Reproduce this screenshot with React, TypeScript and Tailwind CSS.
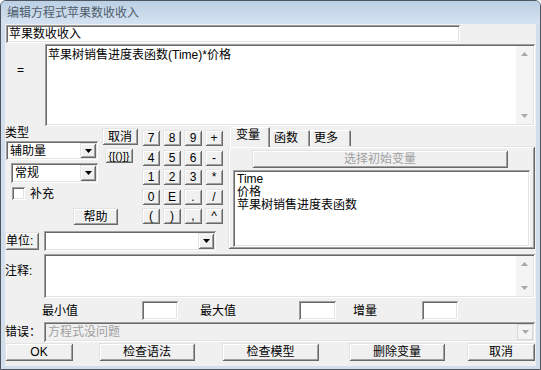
import type { ReactNode } from "react";
import clsx from "clsx";

// classic win32 3D edges
const raised =
  "bg-[#f0f0f0] shadow-[inset_1px_1px_0_#e3e3e3,inset_-1px_-1px_0_#696969,inset_2px_2px_0_#fff,inset_-2px_-2px_0_#a0a0a0]";
const sunken =
  "shadow-[inset_1px_1px_0_#a0a0a0,inset_-1px_-1px_0_#fff,inset_2px_2px_0_#696969,inset_-2px_-2px_0_#e3e3e3]";

function Btn({
  children,
  className,
  disabled,
}: {
  children: ReactNode;
  className?: string;
  disabled?: boolean;
}) {
  return (
    <div
      className={clsx(
        "flex items-center justify-center shrink-0 whitespace-nowrap",
        raised,
        disabled ? "text-[#a0a0a0]" : "text-black",
        className
      )}
    >
      {children}
    </div>
  );
}

function Arrow({ up, color = "#000" }: { up?: boolean; color?: string }) {
  return (
    <svg width="7" height="4" viewBox="0 0 7 4">
      <path d={up ? "M0 4h7L3.5 0z" : "M0 0h7L3.5 4z"} fill={color} />
    </svg>
  );
}

function Combo({ text, className }: { text?: string; className?: string }) {
  return (
    <div className={clsx("flex bg-white p-[2px] shrink-0", sunken, className)}>
      <div className="flex-1 flex items-center pl-[2px]">{text}</div>
      <div className={clsx("w-[16px] flex items-center justify-center", raised)}>
        <Arrow />
      </div>
    </div>
  );
}

function VScroll() {
  return (
    <div className="w-[17px] flex flex-col justify-between items-center bg-[#f4f4f4] py-[6px]">
      <Arrow up color="#a8a8a8" />
      <Arrow color="#a8a8a8" />
    </div>
  );
}

function TextBox({ children, className }: { children?: ReactNode; className?: string }) {
  return (
    <div className={clsx("flex bg-white p-[2px]", sunken, className)}>
      <div className="flex-1 pl-[1px] pt-[2px]">{children}</div>
      <VScroll />
    </div>
  );
}

const keys = ["7", "8", "9", "+", "4", "5", "6", "-", "1", "2", "3", "*", "0", "E", ".", "/", "(", ")", ",", "^"];

export default function App() {
  return (
    <div className="w-[541px] h-[370px] overflow-hidden text-[12px] leading-[14px] text-black font-['Liberation_Sans','Noto_Sans_CJK_SC',sans-serif]">
      <div className="h-full flex flex-col border border-[#4c5560] rounded-t-[6px] bg-[#d2deec]">
        <div className="h-[23px] shrink-0 flex items-center pl-[6px] rounded-t-[5px] bg-gradient-to-b from-[#bccfe4] to-[#d5e2f0] text-[#4e5d6d]">
          编辑方程式苹果数收收入
        </div>

        <div className="flex-1 mx-[4px] mb-[3px] bg-[#f0f0f0] flex flex-col">
          <div className={clsx("mt-[1px] ml-[1px] w-[454px] h-[18px] bg-white flex items-center pl-[3px]", sunken)}>
            苹果数收收入
          </div>

          <div className="flex h-[82px] mt-[1px]">
            <div className="w-[40px] pl-[12px] pt-[19px]">=</div>
            <TextBox className="flex-1 mr-[1px]">苹果树销售进度表函数(Time)*价格</TextBox>
          </div>

          <div className="flex h-[126px]">
            <div className="w-[221px] flex flex-col">
              <div className="flex h-[102px]">
                <div className="w-[137px] flex flex-col">
                  <div className="flex">
                    <div className="w-[97px] flex flex-col">
                      <div className="h-[14px]">类型</div>
                      <Combo text="辅助量" className="mt-[1px] ml-[1px] w-[92px] h-[19px]" />
                      <Combo text="常规" className="mt-[3px] ml-[6px] w-[87px] h-[20px]" />
                      <div className="mt-[4px] ml-[7px] h-[13px] flex items-center gap-[5px]">
                        <div className={clsx("w-[13px] h-[13px] bg-white", sunken)} />
                        <span>补充</span>
                      </div>
                    </div>
                    <div className="flex flex-col">
                      <Btn className="mt-[2px] w-[36px] h-[17px]">取消</Btn>
                      <Btn className="mt-[3px] ml-[3px] w-[28px] h-[15px] text-[11px]">{"{[()]}"}</Btn>
                    </div>
                  </div>
                  <Btn className="mt-[8px] ml-[68px] w-[45px] h-[17px]">帮助</Btn>
                </div>
                <div className="mt-[4px] grid grid-cols-[repeat(4,18px)] auto-rows-[16px] gap-x-[3px] gap-y-[3.5px] h-fit">
                  {keys.map((k) => (
                    <Btn key={k} className="text-[12px]">
                      {k}
                    </Btn>
                  ))}
                </div>
              </div>
              <div className="flex mt-[3px] h-[20px]">
                <Btn className="mt-[1px] w-[34px] h-[18px] justify-start pl-[1px]">单位:</Btn>
                <Combo className="ml-[5px] w-[172px] h-[20px]" />
              </div>
            </div>

            <div className="w-[307px] ml-[2px] flex flex-col pt-[1px] pb-[3px]">
              <div className="flex h-[19px] items-end pl-[2px]">
                <div className="relative -mb-px h-[20px] w-[40px] pl-[6px] pt-[1px] bg-[#f0f0f0] rounded-t-[2px] shadow-[inset_1px_1px_0_#fff,inset_-1px_0_0_#696969,inset_-2px_0_0_#a0a0a0]">
                  变量
                </div>
                <div className="h-[16px] w-[40px] pl-[4px] pt-[1px] rounded-t-[2px] shadow-[inset_1px_1px_0_#fff,inset_-1px_0_0_#696969,inset_-2px_0_0_#a0a0a0]">
                  函数
                </div>
                <div className="h-[16px] w-[41px] pl-[4px] pt-[1px] rounded-t-[2px] shadow-[inset_1px_1px_0_#fff,inset_-1px_0_0_#696969,inset_-2px_0_0_#a0a0a0]">
                  更多
                </div>
              </div>
              <div className={clsx("flex-1 flex flex-col pb-[2px]", raised)}>
                <Btn disabled className="mt-[4px] ml-[24px] w-[256px] h-[18px]">
                  选择初始变量
                </Btn>
                <div className={clsx("mt-[2px] ml-[5px] w-[297px] flex-1 bg-white pl-[4px] pt-[3px] leading-[13px]", sunken)}>
                  <div>Time</div>
                  <div>价格</div>
                  <div>苹果树销售进度表函数</div>
                </div>
              </div>
            </div>
          </div>

          <div className="flex h-[44px] mt-[2px]">
            <div className="w-[39px] pt-[10px]">注释:</div>
            <TextBox className="flex-1 mr-[1px]" />
          </div>

          <div className="flex items-center h-[19px] mt-[3px]">
            <span className="ml-[37px]">最小值</span>
            <div className={clsx("ml-[64px] w-[36px] h-[19px] bg-white", sunken)} />
            <span className="ml-[22px]">最大值</span>
            <div className={clsx("ml-[63px] w-[37px] h-[19px] bg-white", sunken)} />
            <span className="ml-[17px]">增量</span>
            <div className={clsx("ml-[45px] w-[36px] h-[19px] bg-white", sunken)} />
          </div>

          <div className="flex h-[20px] mt-[2px]">
            <div className="w-[39px] flex items-center">错误：</div>
            <div className={clsx("flex-1 mr-[1px] flex p-[2px] bg-[#f0f0f0]", sunken)}>
              <div className="flex-1 flex items-center pl-[2px] text-[#a0a0a0]">方程式没问题</div>
              <div className="w-[16px] flex items-center justify-center bg-[#f4f4f4] border border-[#d9d9d9]">
                <Arrow color="#a8a8a8" />
              </div>
            </div>
          </div>

          <div className="flex h-[18px] mt-[1px]">
            <Btn className="w-[68px]">OK</Btn>
            <Btn className="ml-[26px] w-[96px]">检查语法</Btn>
            <Btn className="ml-[27px] w-[97px]">检查模型</Btn>
            <Btn className="ml-[30px] w-[96px]">删除变量</Btn>
            <Btn className="ml-[22px] w-[68px]">取消</Btn>
          </div>
        </div>
      </div>
    </div>
  );
}
